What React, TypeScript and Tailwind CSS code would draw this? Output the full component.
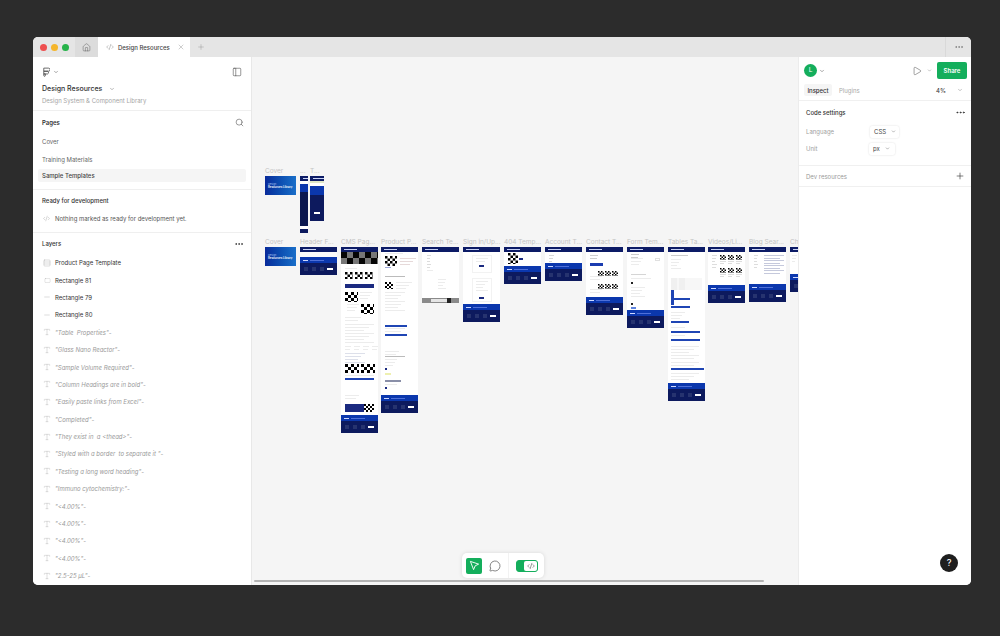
import React from "react";
import { ChevronDown, Search, PanelLeft, Ellipsis, Plus, X, House, Code2, Play, MessageCircle, Type, Rows3, Square, Minus } from "lucide-react";

const Checker = ({ w, h, bg = "#ffffff", fg = "#000000", cell = 2.5 }: { w: number; h: number; bg?: string; fg?: string; cell?: number }) => {
  const id = `chk-${w}-${h}-${fg.slice(1)}-${bg.slice(1)}-${String(cell).replace(".", "_")}`;
  return (
    <svg width={w} height={h} className="block shrink-0">
      <defs>
        <pattern id={id} width={cell * 2} height={cell * 2} patternUnits="userSpaceOnUse">
          <rect width={cell * 2} height={cell * 2} fill={bg} />
          <rect width={cell} height={cell} fill={fg} />
          <rect x={cell} y={cell} width={cell} height={cell} fill={fg} />
        </pattern>
      </defs>
      <rect width={w} height={h} fill={`url(#${id})`} />
    </svg>
  );
};

const Header = () => (
  <div className="h-[5px] shrink-0 bg-[#0c1b66] flex items-center pl-[3px]">
    <div className="w-[13px] h-[1.5px] bg-[#c9d3f5]" />
  </div>
);

const Footer = ({ h = 18 }: { h?: number }) => (
  <div className="shrink-0 bg-[#0d1a5e] flex flex-col" style={{ height: h }}>
    <div className="h-[6px] bg-[#0b37ad] flex items-center pl-[3px] gap-[2px]">
      <div className="w-[5px] h-px bg-[#cfd9ff]" />
      <div className="w-[14px] h-px bg-[#4f70d8]" />
    </div>
    <div className="flex-1 flex items-center justify-between px-[4px]">
      <div className="flex gap-[4px]">
        <div className="w-[4px] h-[4px] bg-[#26336f]" />
        <div className="w-[4px] h-[4px] bg-[#26336f]" />
        <div className="w-[4px] h-[4px] bg-[#26336f]" />
      </div>
      <div className="w-[6px] h-[2px] bg-white" />
    </div>
  </div>
);

const Lines = ({ n, w = "w-full", mt = 0, c = "bg-[#ececec]" }: { n: number; w?: string; mt?: number; c?: string }) => (
  <div className={`flex flex-col gap-[2px] shrink-0 ${w}`} style={{ marginTop: mt }}>
    {Array.from({ length: n }).map((_, i) => (
      <div key={i} className={`h-px ${c}`} style={{ width: `${100 - (i % 3) * 18}%` }} />
    ))}
  </div>
);

const Blue = ({ w = 30, mt = 0 }: { w?: number; mt?: number }) => (
  <div className="h-[2px] shrink-0 bg-[#1f45b4]" style={{ width: w, marginTop: mt }} />
);

const Frame = ({ x, w, label, h, y = 247, children }: { x: number; w: number; label?: string; h: number; y?: number; children?: React.ReactNode }) => (
  <div className="absolute" style={{ left: x - 252, top: y - 57, width: w, height: h }}>
    {label && (
      <div className="absolute left-0 top-[-9px] text-[6.5px] leading-[8px] text-[#c4c4c4] whitespace-nowrap">{label}</div>
    )}
    <div className="w-full h-full bg-white flex flex-col overflow-hidden">{children}</div>
  </div>
);

const CoverBody = ({ sub }: { sub: string }) => (
  <div className="w-full h-full bg-gradient-to-r from-[#0a2a9a] to-[#1a6fc9] flex flex-col justify-center pl-[3px]">
    <div className="text-[2.5px] leading-[3px] text-[#a9c4f2]">Design</div>
    <div className="text-[2.8px] leading-[3px] font-semibold text-white">{sub}</div>
  </div>
);

const Canvas = () => (
  <div className="flex-1 relative bg-[#f5f5f5] overflow-hidden">
    <Frame x={265} y={176} w={31} h={19} label="Cover"><CoverBody sub="Resources Library" /></Frame>
    <Frame x={300} y={176} w={8} h={57} label="...">
      <Header />
      <div className="h-[3px]" />
      <div className="flex-1 bg-[#0d1a5e] flex flex-col">
        <div className="h-[8px] bg-[#0b37ad]" />
        <div className="flex-1 bg-[#0c1850]" />
        <div className="h-[3px] bg-white mb-[4px]" />
      </div>
    </Frame>
    <Frame x={310} y={176} w={14} h={45} label="T...">
      <Header />
      <div className="h-[2px] bg-[#dfe7c8]" />
      <div className="h-[3px] bg-white" />
      <div className="flex-1 bg-[#0d1a5e] flex flex-col">
        <div className="h-[9px] bg-[#0b37ad]" />
        <div className="flex-1 flex items-end justify-end p-[4px] pb-[7px]"><div className="w-[6px] h-[2px] bg-white" /></div>
      </div>
    </Frame>

    <Frame x={265} w={31} h={19} label="Cover"><CoverBody sub="Resources Library" /></Frame>
    <Frame x={300} w={37} h={28} label="Header F...">
      <Header />
      <div className="h-[5px] bg-[#fafafa]" />
      <Footer />
    </Frame>
    <Frame x={341} w={37} h={186} label="CMS Pag...">
      <Header />
      <Checker w={37} h={12} bg="#777777" fg="#050505" cell={6} />
      <div className="flex-1 flex flex-col px-[4px] pt-[4px] min-h-0">
        <Lines n={1} w="w-[12px]" />
        <div className="flex gap-[2px] mt-[3px]">
          <Checker w={8} h={7} /><Checker w={8} h={7} /><Checker w={8} h={7} />
        </div>
        <div className="h-[4px] w-[29px] bg-[#1b2a80] mt-[5px] shrink-0" />
        <div className="flex gap-[2px] mt-[4px]">
          <Checker w={13} h={10} cell={3} />
          <Lines n={3} w="w-[12px]" />
        </div>
        <div className="flex gap-[2px] mt-[2px] justify-end">
          <Lines n={3} w="w-[12px]" />
          <Checker w={13} h={10} cell={3} />
        </div>
        <Lines n={2} w="w-[16px]" mt={3} />
        <Lines n={7} mt={3} />
        <div className="flex gap-[3px] mt-[3px]">
          <Lines n={2} w="w-[6px]" /><Lines n={2} w="w-[6px]" /><Lines n={2} w="w-[6px]" /><Lines n={2} w="w-[6px]" />
        </div>
        <Lines n={4} w="w-[20px]" mt={3} c="bg-[#dde0ea]" />
        <div className="flex gap-[2px] mt-[1px]">
          <Checker w={14} h={9} cell={3} /><Checker w={14} h={9} cell={3} />
        </div>
        <Lines n={1} mt={2} />
        <Blue w={29} mt={2} />
        <Lines n={2} w="w-[14px]" mt={15} />
        <div className="h-[8px] w-[29px] bg-[#1b2a80] flex justify-end mt-[5px] shrink-0"><Checker w={10} h={8} cell={2} /></div>
      </div>
      <Footer />
    </Frame>
    <Frame x={381} w={37} h={166} label="Product P...">
      <Header />
      <div className="flex-1 flex flex-col px-[4px] pt-[1px] min-h-0">
        <Lines n={1} w="w-[18px]" />
        <div className="flex gap-[3px] mt-[2px]">
          <Checker w={12} h={10} cell={2.5} />
          <Lines n={3} w="w-[16px]" mt={2} c="bg-[#e6d9d9]" />
        </div>
        <div className="h-px w-[6px] bg-[#9aa5d8] mt-[1px] shrink-0" />
        <Lines n={1} w="w-[20px]" mt={8} c="bg-[#bbbbbb]" />
        <div className="flex gap-[3px] mt-[5px]">
          <Checker w={8} h={7} cell={2} />
          <Lines n={3} w="w-[16px]" />
        </div>
        <Lines n={7} w="w-[20px]" mt={3} />
        <Blue w={22} mt={14} />
        <Lines n={2} w="w-[20px]" mt={1} />
        <Blue w={22} mt={2} />
        <Lines n={2} w="w-[14px]" mt={15} />
        <Lines n={1} w="w-[20px]" mt={1} c="bg-[#bbbbbb]" />
        <Lines n={3} w="w-[12px]" mt={2} />
        <div className="w-[2px] h-[2px] bg-[#1b2a80] mt-[2px] shrink-0" />
        <div className="w-[6px] h-[2px] bg-[#eef0b0] mt-[3px] shrink-0" />
        <div className="h-[2px] w-[16px] mt-[5px] bg-[#8a8fa8] shrink-0" />
        <Lines n={1} w="w-[12px]" mt={2} />
        <div className="w-[2px] h-[2px] bg-[#1b2a80] mt-[2px] shrink-0" />
      </div>
      <Footer />
    </Frame>
    <Frame x={422} w={37} h={56} label="Search Te...">
      <Header />
      <div className="flex-1 px-[5px] pt-[3px] flex flex-col">
        <Lines n={5} w="w-[4px]" c="bg-[#dcdcdc]" />
        <Lines n={1} w="w-[6px]" mt={2} />
        <div className="flex justify-end mr-[8px] mt-[8px]"><Lines n={4} w="w-[8px]" /></div>
      </div>
      <div className="h-[5px] bg-[#8a8a8a] flex items-center justify-center"><div className="w-[16px] h-[3px] bg-[#e5e5e5]" /><div className="w-[4px] h-[5px] bg-[#222]" /></div>
    </Frame>
    <Frame x={463} w={37} h={75} label="Sign in/Up...">
      <Header />
      <div className="flex-1 flex flex-col items-center pt-[3px]">
        <div className="w-[20px] h-[18px] border border-[#f2f2f2] flex flex-col items-center pt-[2px]">
          <Lines n={2} w="w-[12px]" />
          <div className="w-[5px] h-[2px] bg-[#1b2a80] mt-[3px]" />
        </div>
        <div className="w-[20px] h-[24px] border border-[#f2f2f2] flex flex-col items-center pt-[2px] mt-[5px]">
          <Lines n={4} w="w-[12px]" />
          <div className="w-[5px] h-[2px] bg-[#1b2a80] mt-[6px]" />
        </div>
      </div>
      <Footer />
    </Frame>
    <Frame x={504} w={37} h={37} label="404 Temp...">
      <Header />
      <div className="h-[14px] flex items-start gap-[1px] pl-[4px] pt-[1px]">
        <Checker w={10} h={11} cell={2.5} />
        <div className="w-[4px] h-[2px] bg-[#1b2a80] mt-[5px]" />
      </div>
      <Footer />
    </Frame>
    <Frame x={545} w={37} h={34} label="Account T...">
      <Header />
      <div className="flex-1 pl-[4px] pt-[3px]"><Lines n={3} w="w-[5px]" c="bg-[#d8d8d8]" /></div>
      <Footer />
    </Frame>
    <Frame x={586} w={37} h={68} label="Contact T...">
      <Header />
      <div className="flex-1 flex flex-col pl-[4px] pr-[5px] pt-[3px] min-h-0">
        <Lines n={2} w="w-[8px]" c="bg-[#cfcfcf]" />
        <div className="w-[13px] h-[3px] bg-[#1b3cb0] mt-[4px] shrink-0" />
        <div className="flex justify-end gap-[1px] mt-[5px]"><Checker w={6} h={5} cell={1.5} /><Checker w={6} h={5} cell={1.5} /><Checker w={6} h={5} cell={1.5} /></div>
        <Lines n={2} w="w-[12px]" />
        <div className="flex justify-end gap-[1px] mt-[4px]"><Checker w={6} h={5} cell={1.5} /><Checker w={6} h={5} cell={1.5} /><Checker w={6} h={5} cell={1.5} /></div>
        <Lines n={2} w="w-[12px]" />
      </div>
      <Footer />
    </Frame>
    <Frame x={627} w={37} h={81} label="Form Tem...">
      <Header />
      <div className="flex-1 flex flex-col px-[4px] pt-[2px] min-h-0">
        <Lines n={2} w="w-[8px]" c="bg-[#cccccc]" />
        <div className="flex justify-between"><Lines n={3} w="w-[12px]" /><div className="w-[5px] h-[3px] border border-[#e0e0e0]" /></div>
        <Lines n={1} w="w-[15px]" mt={9} c="bg-[#d5d5d5]" />
        <Lines n={1} w="w-[20px]" mt={3} />
        <div className="w-[2px] h-[2px] bg-[#222] mt-[3px] shrink-0" />
        <Lines n={4} w="w-[14px]" mt={3} />
        <div className="w-[2px] h-[2px] bg-[#222] mt-[6px] shrink-0" />
        <div className="w-[5px] h-[2px] bg-[#5f85e0] mt-[2px] shrink-0" />
      </div>
      <Footer />
    </Frame>
    <Frame x={668} w={37} h={154} label="Tables Ta...">
      <Header />
      <div className="flex-1 flex flex-col px-[3px] pt-[3px] min-h-0">
        <Lines n={1} w="w-[17px]" c="bg-[#cccccc]" />
        <Lines n={4} w="w-[10px]" mt={3} />
        <div className="h-[12px] shrink-0 flex gap-[2px] mt-[9px] bg-[#f7f7f7]"><div className="w-[6px] bg-[#f0f0f0]" /><div className="w-[6px] bg-[#f0f0f0]" /></div>
        <div className="flex flex-col h-[15px] shrink-0 relative">
          <div className="w-[3px] h-[15px] bg-[#1f45b4]" />
          <div className="absolute left-0 top-[8px] w-[19px] h-[1.5px] bg-[#1f45b4]" />
        </div>
        <Blue w={19} mt={1} />
        <Lines n={3} w="w-[14px]" mt={4} />
        <Blue w={18} mt={2} />
        <Lines n={1} w="w-[14px]" mt={4} />
        <Blue w={29} mt={3} />
        <Lines n={1} w="w-[14px]" mt={2} />
        <Blue w={29} mt={3} />
        <Lines n={5} w="w-[28px]" mt={5} />
        <Lines n={2} w="w-[28px]" mt={3} />
        <Blue w={33} mt={2} />
        <Lines n={3} w="w-[28px]" mt={3} />
      </div>
      <Footer />
    </Frame>
    <Frame x={708} w={37} h={56} label="Videos/Li...">
      <Header />
      <div className="flex-1 flex pl-[4px] pt-[3px] gap-[2px]">
        <Lines n={5} w="w-[5px]" c="bg-[#dddddd]" />
        <div className="grid grid-cols-3 gap-x-[2px] gap-y-[4px] ml-[1px] content-start">
          {Array.from({ length: 6 }).map((_, i) => (
            <div key={i} className="flex flex-col gap-[1px]">
              <Checker w={6} h={5} cell={1.5} />
              <div className="h-px w-[6px] bg-[#dddddd]" />
              <div className="h-px w-[4px] bg-[#dddddd]" />
            </div>
          ))}
        </div>
      </div>
      <Footer />
    </Frame>
    <Frame x={749} w={37} h={55} label="Blog Sear...">
      <Header />
      <div className="flex-1 flex pl-[5px] pt-[3px] gap-[6px]">
        <Lines n={5} w="w-[4px]" c="bg-[#dddddd]" />
        <div className="flex flex-col gap-[1px] w-[20px]">
          <Lines n={2} c="bg-[#c5c9dc]" /><Lines n={2} c="bg-[#c5c9dc]" /><Lines n={2} c="bg-[#c5c9dc]" /><Lines n={2} c="bg-[#c5c9dc]" />
        </div>
      </div>
      <Footer />
    </Frame>
    <Frame x={790} w={37} h={45} label="Ch">
      <Header />
      <div className="flex-1 pl-[2px] pt-[3px]"><Lines n={3} w="w-[5px]" /></div>
      <Footer />
    </Frame>

    <div className="absolute bottom-[3px] left-[2px] w-[510px] h-[2px] rounded-full bg-[#b3b3b3]" />

    <div className="absolute left-[210px] top-[496px] w-[82px] h-[25px] rounded-[5px] bg-white shadow-[0_0_4px_rgba(0,0,0,0.12)] flex items-center pl-[4px]">
      <div className="w-[16px] h-[16px] rounded-[2px] bg-[#14ae5c] flex items-center justify-center">
        <svg width="11" height="11" viewBox="0 0 12 12" fill="none" stroke="white" strokeWidth="1">
          <path d="M1.5 1.5 L10.5 4.5 L6.8 6.3 L5 10.5 Z" strokeLinejoin="round" />
        </svg>
      </div>
      <MessageCircle size={12} strokeWidth={1.4} className="ml-[7px] text-[#555]" />
      <div className="w-px h-[25px] bg-[#f2f2f2] ml-[7px]" />
      <div className="ml-[7px] w-[22px] h-[12px] rounded-[3px] bg-[#14ae5c] flex justify-end border border-[#14ae5c]">
        <div className="w-[13px] h-full rounded-[2px] bg-white flex items-center justify-center">
          <Code2 size={8} strokeWidth={1.5} className="text-[#333]" />
        </div>
      </div>
    </div>
  </div>
);

const Section = ({ children }: { children: React.ReactNode }) => <div className="border-t border-[#efefef]">{children}</div>;

const layers: string[] = [
  '"Table  Properties"-',
  '"Glass Nano Reactor"-',
  '"Sample Volume Required"-',
  '"Column Headings are in bold"-',
  '"Easily paste links from Excel"-',
  '"Completed"-',
  '"They exist in  a <thead>"-',
  '"Styled with a border  to separate it "-',
  '"Testing a long word heading"-',
  '"Immuno cytochemistry:"-',
  '"<4.00%"-',
  '"<4.00%"-',
  '"<4.00%"-',
  '"<4.00%"-',
  '"2.5-25 µL"-',
];

const LayerRow = ({ icon, children, italic }: { icon: React.ReactNode; children: React.ReactNode; italic?: boolean }) => (
  <div className="h-[17.4px] flex items-center pl-[9px] shrink-0">
    <div className="w-[10px] flex justify-center text-[#a8a8a8]">{icon}</div>
    <span className={`ml-[3px] text-[6px] whitespace-pre ${italic ? "italic text-[#9a9a9a]" : "text-[#333]"}`}>{children}</span>
  </div>
);

const LeftPanel = () => (
  <div className="w-[219px] shrink-0 bg-white border-r border-[#e8e8e8] flex flex-col overflow-hidden">
    <div className="h-[53px] shrink-0 flex flex-col pl-[9px] pr-[9px]">
      <div className="h-[27px] flex items-center justify-between pt-[2px]">
        <div className="flex items-center gap-[3px] pl-px">
          <svg width="7" height="10" viewBox="0 0 9 12" fill="none" stroke="#444" strokeWidth="1">
            <path d="M1 1h6a2 2 0 0 1 0 4H1zM1 5h5a2 2 0 0 1 0 3.5H1zM1 8.5h2v2a1 1 0 0 1-2 0z" />
          </svg>
          <ChevronDown size={6} strokeWidth={2} className="text-[#555]" />
        </div>
        <PanelLeft size={10} strokeWidth={1.2} className="text-[#333]" />
      </div>
      <div className="flex items-center mt-[-2px] h-[14px]">
        <span className="text-[7px] font-medium text-[#333]">Design Resources</span>
        <ChevronDown size={6} strokeWidth={2} className="ml-[7px] text-[#777]" />
      </div>
      <div className="text-[6px] leading-[10px] text-[#a5a5a5]">Design System &amp; Component Library</div>
    </div>
    <Section>
      <div className="h-[22px] flex items-center justify-between pl-[9px] pr-[7px]">
        <span className="text-[6px] font-semibold text-[#333]">Pages</span>
        <Search size={9} strokeWidth={1.4} className="text-[#444]" />
      </div>
      <div className="h-[17px] flex items-center pl-[9px] text-[6px] text-[#666]">Cover</div>
      <div className="h-[18px] flex items-center pl-[9px] text-[6px] text-[#666]">Training Materials</div>
      <div className="h-[13px] mx-[5px] mt-[1px] flex items-center pl-[4px] rounded-[2px] bg-[#f5f5f5] text-[6px] font-medium text-[#444]">Sample Templates</div>
    </Section>
    <div className="h-[7px]" />
    <Section>
      <div className="h-[21px] flex items-center pl-[9px] text-[6px] font-medium text-[#333]">Ready for development</div>
      <div className="h-[15px] flex items-center pl-[10px]">
        <Code2 size={7} strokeWidth={1.3} className="text-[#999]" />
        <span className="ml-[5px] text-[6px] text-[#555]">Nothing marked as ready for development yet.</span>
      </div>
    </Section>
    <div className="h-[6px]" />
    <Section>
      <div className="h-[21px] flex items-center justify-between pl-[9px] pr-[7px]">
        <span className="text-[6px] font-medium text-[#333]">Layers</span>
        <Ellipsis size={10} strokeWidth={2} className="text-[#333]" />
      </div>
      <div className="flex flex-col">
        <LayerRow icon={<Rows3 size={8} strokeWidth={1.2} />}>Product Page Template</LayerRow>
        <LayerRow icon={<Square size={7} strokeWidth={1.1} className="scale-y-75" />}>Rectangle 81</LayerRow>
        <LayerRow icon={<Minus size={8} strokeWidth={1.2} />}>Rectangle 79</LayerRow>
        <LayerRow icon={<Minus size={8} strokeWidth={1.2} />}>Rectangle 80</LayerRow>
        {layers.map((t, i) => (
          <LayerRow key={i} italic icon={<Type size={8} strokeWidth={1.1} />}>{t}</LayerRow>
        ))}
      </div>
    </Section>
  </div>
);

const Chip = ({ label, w }: { label: string; w: string }) => (
  <div className={`${w} h-[12px] rounded-[2px] bg-white shadow-[0_0_2px_rgba(0,0,0,0.15)] flex items-center pl-[4px] text-[6px] text-[#444] gap-[5px]`}>
    {label}
    <ChevronDown size={5} strokeWidth={2.2} className="text-[#666]" />
  </div>
);

const RightPanel = () => (
  <div className="w-[173px] shrink-0 bg-white border-l border-[#ececec] flex flex-col">
    <div className="h-[27px] flex items-center pl-[5px] pr-[4px]">
      <div className="w-[13px] h-[13px] rounded-full bg-[#14ae5c] flex items-center justify-center text-[6.5px] text-white">L</div>
      <ChevronDown size={6} strokeWidth={2} className="ml-[2px] text-[#555]" />
      <Play size={10} strokeWidth={1.2} className="ml-auto text-[#444]" />
      <ChevronDown size={5} strokeWidth={2} className="ml-[5px] mr-px text-[#777]" />
      <div className="ml-[4px] w-[30px] h-[17px] rounded-[2px] bg-[#14ae5c] flex items-center justify-center text-[6px] font-semibold text-white">Share</div>
    </div>
    <div className="h-[12px] mb-[4px] flex items-center pl-[5px] pr-[8px]">
      <div className="w-[28px] h-[12px] rounded-[2px] bg-[#f5f5f5] flex items-center justify-center text-[6px] font-medium text-[#333]">Inspect</div>
      <span className="ml-[7px] text-[6px] text-[#a8a8a8]">Plugins</span>
      <span className="ml-auto text-[6px] font-medium text-[#444]">4%</span>
      <ChevronDown size={6} strokeWidth={2} className="ml-[11px] text-[#888]" />
    </div>
    <div className="h-[65px] border-t border-[#f0f0f0] flex flex-col pl-[7px] pr-[5px]">
      <div className="h-[22px] flex items-center justify-between">
        <span className="text-[6px] font-medium text-[#333]">Code settings</span>
        <Ellipsis size={11} strokeWidth={2} className="text-[#333]" />
      </div>
      <div className="h-[17px] flex items-center">
        <span className="w-[64px] text-[6px] text-[#a0a0a0]">Language</span>
        <Chip label="CSS" w="w-[29px]" />
      </div>
      <div className="h-[17px] flex items-center">
        <span className="w-[63px] text-[6px] text-[#a0a0a0]">Unit</span>
        <Chip label="px" w="w-[26px]" />
      </div>
    </div>
    <div className="h-[22px] border-y border-[#f0f0f0] flex items-center justify-between pl-[7px] pr-[6px]">
      <span className="text-[6px] text-[#999]">Dev resources</span>
      <Plus size={10} strokeWidth={1.5} className="text-[#333]" />
    </div>
    <div className="flex-1 relative">
      <div className="absolute right-[13px] bottom-[13px] w-[18px] h-[18px] rounded-full bg-[#1e1e1e] flex items-center justify-center text-[9px] font-medium text-white">?</div>
    </div>
  </div>
);

const TabBar = () => (
  <div className="h-[20px] shrink-0 bg-[#e5e5e5] flex items-stretch">
    <div className="w-[42px] flex items-center gap-[4px] pl-[7px]">
      <div className="w-[7px] h-[7px] rounded-full bg-[#ee4f4f]" />
      <div className="w-[7px] h-[7px] rounded-full bg-[#f5b62c]" />
      <div className="w-[7px] h-[7px] rounded-full bg-[#27b34a]" />
    </div>
    <div className="w-[23px] bg-[#dcdcdc] flex items-center justify-center">
      <House size={9} strokeWidth={1.2} className="text-[#555]" />
    </div>
    <div className="w-[92px] bg-white flex items-center pl-[8px]">
      <Code2 size={8} strokeWidth={1.3} className="text-[#777]" />
      <span className="ml-[4px] text-[6px] font-medium text-[#444] whitespace-nowrap">Design Resources</span>
      <X size={8} strokeWidth={1.1} className="ml-[7px] text-[#777]" />
    </div>
    <div className="w-[22px] flex items-center justify-center">
      <Plus size={8} strokeWidth={1.2} className="text-[#888]" />
    </div>
    <div className="ml-auto w-[26px] border-l border-[#d9d9d9] flex items-center justify-center">
      <Ellipsis size={10} strokeWidth={1.8} className="text-[#777]" />
    </div>
  </div>
);

export default function App() {
  return (
    <div className="w-[1000px] h-[636px] bg-[#2c2c2c] pt-[37px] pl-[33px] overflow-hidden font-['Inter',sans-serif]">
      <div className="w-[938px] h-[548px] rounded-[5px] overflow-hidden flex flex-col bg-white">
        <TabBar />
        <div className="flex-1 flex min-h-0">
          <LeftPanel />
          <Canvas />
          <RightPanel />
        </div>
      </div>
    </div>
  );
}
